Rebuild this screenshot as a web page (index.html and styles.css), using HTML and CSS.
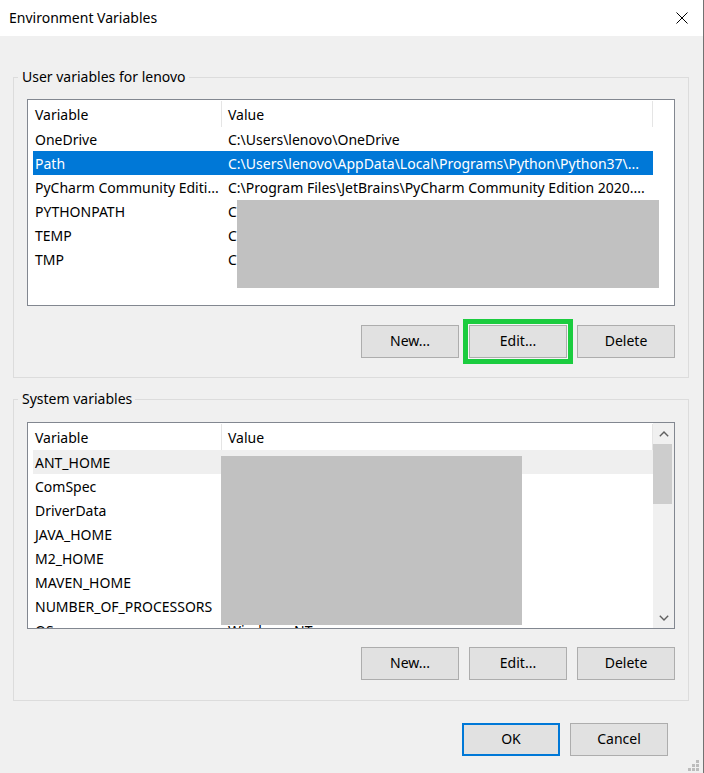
FILE: index.html
```html
<!DOCTYPE html>
<html lang="en">
<head>
<meta charset="utf-8">
<title>Environment Variables</title>
<link rel="stylesheet" href="styles.css">
</head>
<body>
<div class="window">
  <header class="titlebar">
    <span class="title">Environment Variables</span>
    <svg class="close" width="12" height="12" viewBox="0 0 12 12" aria-label="Close">
      <path d="M0.5 0.5L11.5 11.5M11.5 0.5L0.5 11.5" stroke="#000" stroke-width="1" fill="none"/>
    </svg>
  </header>
  <main class="content">
    <fieldset class="group group-user">
      <legend>User variables for lenovo</legend>
      <div class="list">
        <div class="list-view">
          <div class="list-head">
            <div class="hcol hvar">Variable</div>
            <div class="hcol hval">Value</div>
          </div>
          <div class="rows">
            <div class="row"><span class="cvar">OneDrive</span><span class="cval">C:\Users\lenovo\OneDrive</span></div>
            <div class="row selected"><span class="cvar">Path</span><span class="cval">C:\Users\lenovo\AppData\Local\Programs\Python\Python37\...</span></div>
            <div class="row"><span class="cvar">PyCharm Community Editi...</span><span class="cval">C:\Program Files\JetBrains\PyCharm Community Edition 2020....</span></div>
            <div class="row"><span class="cvar">PYTHONPATH</span><span class="cval">C:</span></div>
            <div class="row"><span class="cvar">TEMP</span><span class="cval">C:</span></div>
            <div class="row"><span class="cvar">TMP</span><span class="cval">C:</span></div>
          </div>
        </div>
        <div class="redact redact-user"></div>
      </div>
      <div class="btn-row">
        <button class="btn">New...</button>
        <button class="btn btn-highlight">Edit...</button>
        <button class="btn">Delete</button>
      </div>
    </fieldset>

    <fieldset class="group group-system">
      <legend>System variables</legend>
      <div class="list">
        <div class="list-view">
          <div class="list-head">
            <div class="hcol hvar">Variable</div>
            <div class="hcol hval">Value</div>
          </div>
          <div class="rows">
            <div class="row hover"><span class="cvar">ANT_HOME</span><span class="cval"></span></div>
            <div class="row"><span class="cvar">ComSpec</span><span class="cval"></span></div>
            <div class="row"><span class="cvar">DriverData</span><span class="cval"></span></div>
            <div class="row"><span class="cvar">JAVA_HOME</span><span class="cval"></span></div>
            <div class="row"><span class="cvar">M2_HOME</span><span class="cval"></span></div>
            <div class="row"><span class="cvar">MAVEN_HOME</span><span class="cval"></span></div>
            <div class="row"><span class="cvar">NUMBER_OF_PROCESSORS</span><span class="cval"></span></div>
            <div class="row"><span class="cvar">OS</span><span class="cval">Windows_NT</span></div>
          </div>
        </div>
        <div class="scrollbar">
          <div class="sb-arrow">
            <svg width="10" height="6" viewBox="0 0 10 6"><path d="M0.8 5.2L5 1L9.2 5.2" stroke="#606060" stroke-width="1.4" fill="none"/></svg>
          </div>
          <div class="sb-track"><div class="sb-thumb"></div></div>
          <div class="sb-arrow">
            <svg width="10" height="6" viewBox="0 0 10 6"><path d="M0.8 0.8L5 5L9.2 0.8" stroke="#606060" stroke-width="1.4" fill="none"/></svg>
          </div>
        </div>
        <div class="redact redact-system"></div>
      </div>
      <div class="btn-row">
        <button class="btn">New...</button>
        <button class="btn">Edit...</button>
        <button class="btn">Delete</button>
      </div>
    </fieldset>

    <div class="dialog-row">
      <button class="btn btn-default">OK</button>
      <button class="btn">Cancel</button>
    </div>

    <svg class="grip" width="12" height="12" viewBox="0 0 12 12" aria-hidden="true">
      <rect x="8" y="0" width="3" height="3" fill="#bcbcbc"/>
      <rect x="4" y="4" width="3" height="3" fill="#bcbcbc"/>
      <rect x="8" y="4" width="3" height="3" fill="#bcbcbc"/>
      <rect x="0" y="8" width="3" height="3" fill="#bcbcbc"/>
      <rect x="4" y="8" width="3" height="3" fill="#bcbcbc"/>
      <rect x="8" y="8" width="3" height="3" fill="#bcbcbc"/>
    </svg>
  </main>
</div>
</body>
</html>
```

FILE: styles.css
```css
* { box-sizing: border-box; }

html, body {
  margin: 0;
  padding: 0;
  background: #f0f0f0;
}

body {
  font-family: "Segoe UI", "Noto Sans", "Open Sans", sans-serif;
  font-size: 14px;
  color: #000;
}

.window {
  width: 704px;
  height: 773px;
  display: flex;
  flex-direction: column;
  border-right: 1px solid #727272;
  background: #f0f0f0;
  overflow: hidden;
}

.titlebar {
  height: 36px;
  flex: none;
  background: #fff;
  display: flex;
  align-items: center;
  justify-content: space-between;
  padding: 0 15px 0 9px;
}

.title {
  font-size: 14px;
  line-height: 20px;
  padding-bottom: 1px;
}

.close { display: block; margin-top: -1px; }

.content {
  position: relative;
  flex: 1;
  display: flex;
  flex-direction: column;
  padding: 31px 14px 0 13px;
}

.group {
  margin: 0;
  border: 1px solid #dcdcdc;
  padding: 12px 13px 19px 13px;
  min-width: 0;
}

.group-system {
  margin-top: 11px;
  padding-top: 13px;
  padding-bottom: 20px;
}

.group legend {
  margin-left: -9px;
  padding: 0 3px 0 4px;
  line-height: 20px;
  font-size: 14px;
}

.list {
  position: relative;
  height: 207px;
  border: 1px solid #828790;
  background: #fff;
  display: flex;
  overflow: hidden;
}

.list-view {
  flex: 1;
  min-width: 0;
  display: flex;
  flex-direction: column;
}

.list-head {
  height: 27px;
  flex: none;
  display: flex;
}

.hcol {
  border-right: 1px solid #e5e5e5;
  white-space: nowrap;
  margin-top: 1px;
  padding-top: 2px;
  line-height: 24px;
}

.hvar { width: 194px; padding-left: 7px; }
.hval { width: 431px; padding-left: 6px; }

.rows { flex: 1; }

.row {
  margin-left: 5px;
  width: 620px;
  height: 24px;
  padding-top: 1px;
  line-height: 24px;
  display: flex;
  white-space: nowrap;
  overflow: hidden;
}

.row.selected { background: #0078d7; color: #fff; }
.row.hover { background: #efefef; }

.cvar { width: 189px; flex: none; padding-left: 2px; overflow: hidden; }
.cval { flex: 1; padding-left: 6px; overflow: hidden; }

.redact {
  position: absolute;
  background: #c1c1c1;
}

.redact-user { left: 209px; top: 100px; width: 422px; height: 88px; }
.redact-system { left: 193px; top: 33px; width: 301px; height: 169px; }

.scrollbar {
  width: 21px;
  flex: none;
  background: #f0f0f0;
  display: flex;
  flex-direction: column;
}

.sb-arrow {
  height: 21px;
  flex: none;
  display: flex;
  align-items: center;
  justify-content: center;
}

.sb-track { flex: 1; }

.sb-thumb {
  height: 60px;
  width: 19px;
  background: #cdcdcd;
}

.btn-row {
  margin-top: 19px;
  display: flex;
  justify-content: flex-end;
  gap: 10px;
}

.group-system .btn-row { margin-top: 18px; }

.btn {
  width: 98px;
  height: 33px;
  margin: 0;
  padding: 0 0 2px;
  border: 1px solid #adadad;
  background: #e1e1e1;
  font-family: inherit;
  font-size: 14px;
  color: #000;
  line-height: 20px;
}

.btn-highlight {
  box-shadow: 0 0 0 1px #f7f7f7, 0 0 0 6px #1bcc3f;
}

.btn-default {
  border: 2px solid #0078d7;
}

.dialog-row {
  margin-top: 22px;
  padding-right: 21px;
  display: flex;
  justify-content: flex-end;
  gap: 10px;
}

.grip {
  position: absolute;
  right: 3px;
  bottom: 1px;
}
```
